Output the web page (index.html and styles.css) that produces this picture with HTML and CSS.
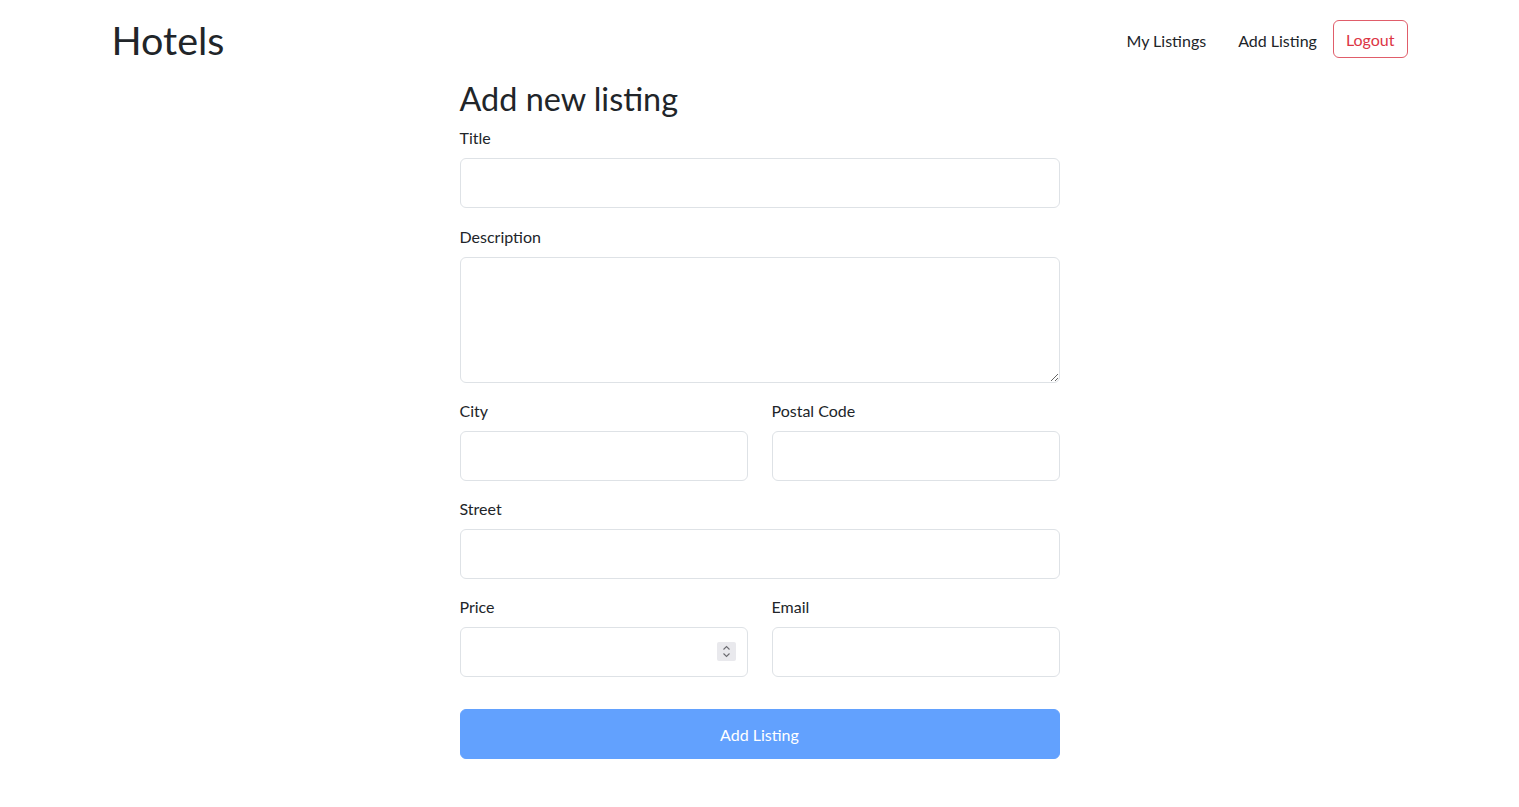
FILE: index.html
```html
<!DOCTYPE html>
<html lang="en">
<head>
<meta charset="utf-8">
<title>Hotels</title>
<link rel="stylesheet" href="styles.css">
</head>
<body>
<nav class="navbar">
  <div class="container nav-inner">
    <a class="brand" href="#">Hotels</a>
    <div class="nav-links">
      <a class="nav-link" href="#">My Listings</a>
      <a class="nav-link" href="#">Add Listing</a>
      <button class="btn-logout" type="button">Logout</button>
    </div>
  </div>
</nav>
<main class="container">
  <form class="listing-form">
    <h2 class="form-title">Add new listing</h2>
    <div class="group group-first">
      <label class="form-label" for="title">Title</label>
      <input class="form-control" id="title" type="text">
    </div>
    <div class="group">
      <label class="form-label" for="desc">Description</label>
      <textarea class="form-control textarea" id="desc"></textarea>
    </div>
    <div class="row">
      <div class="group">
        <label class="form-label" for="city">City</label>
        <input class="form-control" id="city" type="text">
      </div>
      <div class="group">
        <label class="form-label" for="postal">Postal Code</label>
        <input class="form-control" id="postal" type="text">
      </div>
    </div>
    <div class="group">
      <label class="form-label" for="street">Street</label>
      <input class="form-control" id="street" type="text">
    </div>
    <div class="row">
      <div class="group">
        <label class="form-label" for="price">Price</label>
        <div class="num-wrap">
          <input class="form-control num" id="price" type="number">
          <span class="spin" aria-hidden="true">
            <svg width="19" height="19" viewBox="0 0 19 19">
              <path d="M6.5 7.5 L9.5 4.5 L12.5 7.5" fill="none" stroke="#6b6b70" stroke-width="1.1"/>
              <path d="M6.5 11.5 L9.5 14.5 L12.5 11.5" fill="none" stroke="#6b6b70" stroke-width="1.1"/>
            </svg>
          </span>
        </div>
      </div>
      <div class="group">
        <label class="form-label" for="email">Email</label>
        <input class="form-control" id="email" type="email">
      </div>
    </div>
    <button class="btn-submit" type="submit" disabled>Add Listing</button>
  </form>
</main>
</body>
</html>
```
FILE: styles.css
```css
* { box-sizing: border-box; }
html, body { margin: 0; padding: 0; }
body {
  font-family: "Lato", "Noto Sans", "Liberation Sans", sans-serif;
  font-size: 16px;
  line-height: 1.5;
  color: #212529;
  background: #fff;
}
.container {
  max-width: 1320px;
  margin: 0 auto;
  padding: 0 12px;
}
.navbar {
  padding: 8px 0;
}
.nav-inner {
  display: flex;
  align-items: center;
  justify-content: space-between;
  height: 60px;
}
.brand {
  font-size: 39.5px;
  line-height: 60px;
  color: #212529;
  text-decoration: none;
  padding-top: 4px;
}
.nav-links {
  display: flex;
  align-items: center;
}
.nav-link {
  color: #212529;
  text-decoration: none;
  padding: 11px 16px 5px;
  line-height: 24px;
}
.btn-logout {
  font-family: inherit;
  font-size: 16px;
  line-height: 24px;
  color: #dc3545;
  background: #fff;
  border: 1px solid #e05d6a;
  border-radius: 6px;
  padding: 7px 12px 5px;
  height: 38px;
  margin-top: 2px;
}
.listing-form {
  max-width: 600px;
  margin: 0 auto;
  display: flex;
  flex-direction: column;
}
.form-title {
  font-size: 32.4px;
  font-weight: 400;
  line-height: 42px;
  margin: 2px 0 6px;
}
.group {
  display: flex;
  flex-direction: column;
  margin-bottom: 16px;
}
.group-first {
  margin-bottom: 17px;
}
.form-label {
  line-height: 24px;
  margin-bottom: 8px;
}
.form-control {
  display: block;
  width: 100%;
  height: 50px;
  padding: 6px 12px;
  font-family: inherit;
  font-size: 16px;
  color: #212529;
  background: #fff;
  border: 1px solid #dee2e6;
  border-radius: 6px;
  outline: none;
}
.textarea {
  height: 126px;
  resize: vertical;
}
.num-wrap {
  position: relative;
}
.num::-webkit-inner-spin-button,
.num::-webkit-outer-spin-button {
  -webkit-appearance: none;
  margin: 0;
}
.num {
  -moz-appearance: textfield;
}
.spin {
  position: absolute;
  right: 12px;
  top: 15px;
  width: 19px;
  height: 19px;
  background: #e9e9ed;
  border-radius: 2px;
  display: flex;
}
.row {
  display: grid;
  grid-template-columns: 1fr 1fr;
  column-gap: 24px;
}
.btn-submit {
  margin-top: 16px;
  height: 50px;
  width: 100%;
  font-family: inherit;
  font-size: 16px;
  color: #fff;
  background: #62a1fe;
  border: 1px solid #62a1fe;
  border-radius: 6px;
}
```
